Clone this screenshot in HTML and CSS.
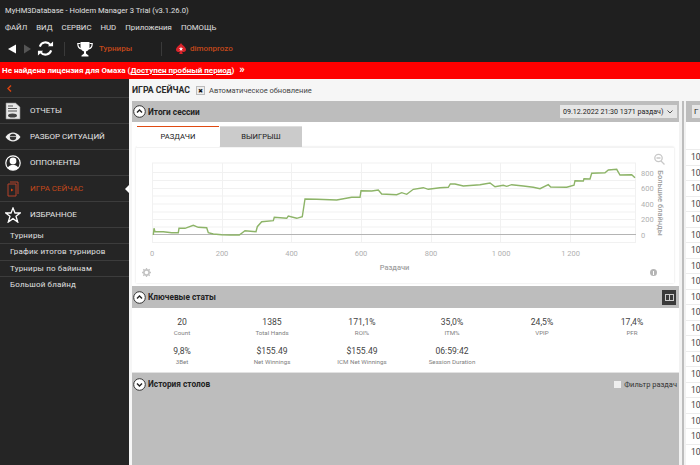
FILE: index.html
```html
<!DOCTYPE html>
<html lang="ru">
<head>
    <meta charset="UTF-8">
    <title>MyHM3Database - Holdem Manager 3 Trial</title>
    <link rel="stylesheet" href="styles.css">
</head>
<body>
<div class="app">
    <div class="titlebar">MyHM3Database - Holdem Manager 3 Trial (v3.1.26.0)</div>
    <nav class="menubar">
        <span>ФАЙЛ</span><span>ВИД</span><span>СЕРВИС</span><span>HUD</span><span>Приложения</span><span>ПОМОЩЬ</span>
    </nav>
    <div class="toolbar">
        <svg class="tool-arrows" width="28" height="14" viewBox="0 0 28 14">
            <path d="M0 7 8 2.500V11.500Z" fill="#fff"/>
            <path d="M23 7 16 2.500V11.500Z" fill="#555"/>
        </svg>
        <svg class="tool-refresh" width="17" height="17" viewBox="0 0 18 18" fill="none" stroke="#fff" stroke-width="2.200">
            <path d="M3 7A6.300 6.300 0 0 1 14 5"/>
            <path d="M15 11A6.300 6.300 0 0 1 4 13"/>
            <path d="M11.500 6.500H17V1.500Z" fill="#fff" stroke="none"/>
            <path d="M6.500 11.500H1V16.500Z" fill="#fff" stroke="none"/>
        </svg>
        <i class="tool-sep"></i>
        <svg class="tool-cup" width="16" height="16" viewBox="0 0 16 16">
            <path d="M3.500 1H12.500V6C12.500 9 10 10 9 10.500V12.500L11.500 14.500V15.500H4.500V14.500L7 12.500V10.500C6 10 3.500 9 3.500 6Z" fill="#fff"/>
            <path d="M3.500 2.500H.8C.8 6 2 7.500 4.500 8M12.500 2.500H15.200C15.200 6 14 7.500 11.500 8" fill="none" stroke="#fff" stroke-width="1.200"/>
        </svg>
        <span class="tool-link">Турниры</span>
        <i class="tool-sep tool-sep-2"></i>
        <svg class="tool-room" width="10" height="11" viewBox="0 0 10 11">
            <path d="M5 0C6.500 2.500 10 4 10 6.800C10 8.800 7.800 9.600 6 8.400L6.800 11H3.200L4 8.400C2.200 9.600 0 8.800 0 6.800C0 4 3.500 2.500 5 0Z" fill="#d8232a"/>
            <path d="M5 3.500 5.600 5.300H7.300L5.900 6.300 6.400 8 5 7 3.600 8 4.100 6.300 2.700 5.300H4.400Z" fill="#fff"/>
        </svg>
        <span class="tool-link">dimonprozo</span>
    </div>
    <div class="license">Не найдена лицензия для Омаха (<u>Доступен пробный период</u>)<span class="license-more">»</span></div>

    <div class="workspace">
        <aside class="sidebar">
            <div class="side-back">
                <svg width="5" height="7" viewBox="0 0 5 7"><path d="M4 .5 1 3.500 4 6.500" fill="none" stroke="#d8430f" stroke-width="1.500"/></svg>
            </div>
            <div class="side-item">
                <svg class="side-icon" width="16" height="18" viewBox="0 0 16 18">
                    <path d="M1 1H10.500L15 5V17H1Z" fill="#e8e8e8" stroke="#888" stroke-width=".6"/>
                    <path d="M3 4H8M3 6.500H12M3 9H12" stroke="#555"/>
                    <ellipse cx="7.500" cy="13.500" rx="4.500" ry="2" fill="#444"/>
                </svg>
                ОТЧЕТЫ
            </div>
            <div class="side-item">
                <svg class="side-icon" width="16" height="10" viewBox="0 0 16 10">
                    <path d="M.5 5C3 1.500 5.500 .5 8 .5S13 1.500 15.500 5C13 8.500 10.500 9.500 8 9.500S3 8.500 .5 5Z" fill="#eee"/>
                    <circle cx="8" cy="5" r="3.200" fill="#333"/>
                    <path d="M5 4.500H11" stroke="#aaa"/>
                </svg>
                РАЗБОР СИТУАЦИЙ
            </div>
            <div class="side-item">
                <svg class="side-icon" width="16" height="16" viewBox="0 0 16 16">
                    <circle cx="8" cy="8" r="7.200" fill="#252525" stroke="#fff" stroke-width="1.200"/>
                    <circle cx="8" cy="6" r="3.400" fill="#fff"/>
                    <path d="M2.500 13C4 10.300 6 10 8 10S12 10.300 13.500 13C12 14.500 10 15 8 15S4 14.500 2.500 13Z" fill="#fff"/>
                </svg>
                ОППОНЕНТЫ
            </div>
            <div class="side-item side-item-active">
                <svg class="side-icon" width="16" height="16" viewBox="0 0 16 16" fill="none" stroke="#b5432a">
                    <path d="M5 1H13V13"/>
                    <path d="M3 3H11V15H3Z"/>
                    <path d="M6 7.500 8.500 9 6 10.500Z" fill="#d8430f" stroke="none"/>
                </svg>
                ИГРА СЕЙЧАС
                <i class="side-marker"></i>
            </div>
            <div class="side-item">
                <svg class="side-icon" width="16" height="16" viewBox="0 0 16 16">
                    <path d="M8 1 10 6H15.400L11 9.300 12.700 15 8 11.600 3.300 15 5 9.300 .6 6H6Z" fill="none" stroke="#fff" stroke-width="1.300"/>
                </svg>
                ИЗБРАННОЕ
            </div>
            <div class="side-sub">Турниры</div>
            <div class="side-sub">График итогов турниров</div>
            <div class="side-sub">Турниры по байинам</div>
            <div class="side-sub">Большой блайнд</div>
        </aside>

        <main class="content">
            <div class="page-head">
                <h1>ИГРА СЕЙЧАС</h1>
                <span class="check check-on">✖</span>
                <span class="auto-label">Автоматическое обновление</span>
            </div>
            <div class="columns">
                <div class="left-col">
                    <div class="panel-head">
                        <svg class="toggle" width="13" height="13" viewBox="0 0 13 13"><circle cx="6.500" cy="6.500" r="5.800" fill="#fff" stroke="#333"/><path d="M4 7.500 6.500 5 9 7.500" fill="none" stroke="#222" stroke-width="1.400"/></svg>
                        <span class="panel-title">Итоги сессии</span>
                        <div class="session-select">09.12.2022 21:30 1371 раздач)<svg width="6" height="4" viewBox="0 0 6 4"><path d="M.5 .5 3 3 5.500 .5" fill="none" stroke="#555"/></svg></div>
                    </div>
                    <div class="summary">
                        <div class="tabs">
                            <div class="tab tab-active">РАЗДАЧИ</div>
                            <div class="tab">ВЫИГРЫШ</div>
                        </div>
                        <div class="chart-card">
                            <svg class="chart" width="538" height="136" viewBox="136 147 538 136">
                                <g stroke="#f1f1f1" fill="none">
                                    <path d="M152 163H636M152 172.500H636M152 180.500H636M152 188.500H636M152 196H636M152 204H636M152 212H636M152 219.500H636M152 227H636M152 242.500H636"/>
                                    <path d="M152.500 163V243M222.500 163V243M291.500 163V243M361.500 163V243M431.500 163V243M500.500 163V243M570.500 163V243M635.500 163V243"/>
                                </g>
                                <path d="M153 234.500H636" stroke="#b4b4b4" stroke-width="1"/>
                                <polyline fill="none" stroke="#8db468" stroke-width="1.400" points="153.300,235 154,228.300 155,231.700 163.300,231.700 171.700,232.700 178.300,232.700 179,228.300 185,228.300 193.300,225.300 198.300,227.300 206.700,227.700 208.300,232.700 213.300,234 221.700,234.700 230,235 239.300,235 245,230.700 256,231.700 257.300,226.700 261.700,221.700 273.300,220.700 274.300,217.300 286.700,218.300 288.300,216 296.700,218.300 302.300,216.700 305,199 316.700,199.300 336.700,200 351.700,197.300 360,197.300 361,190.700 371.700,191 378.300,190 381.700,194 396.700,194.700 401.700,192.700 406.700,194.300 413.300,189.300 423.300,187.700 428.300,189.300 440,187.700 448.300,187.300 450.300,184 455,184 463.300,186 480,184.700 490,183 495,186.700 503.300,185.300 506.700,186.300 511.700,184.700 523.300,186 533.300,187.300 540,188.700 548.300,184.700 550.700,187 566.700,187.300 574,185.300 575,180.700 583.300,181 584,178.700 590,179 591.700,173.300 605,172.700 608.300,170 616.700,169.300 620,175 631.700,174.700 635,177.700"/>
                                <g class="axis-text" text-anchor="middle">
                                    <text x="152" y="256">0</text>
                                    <text x="222" y="256">200</text>
                                    <text x="291.500" y="256">400</text>
                                    <text x="361" y="256">600</text>
                                    <text x="431" y="256">800</text>
                                    <text x="501" y="256">1 000</text>
                                    <text x="570.500" y="256">1 200</text>
                                </g>
                                <g class="axis-text">
                                    <text x="641" y="175.500">800</text>
                                    <text x="641" y="191">600</text>
                                    <text x="641" y="206.500">400</text>
                                    <text x="641" y="222">200</text>
                                    <text x="641" y="237.500">0</text>
                                </g>
                                <text class="axis-title" x="394.500" y="270" text-anchor="middle">Раздачи</text>
                                <text class="axis-title" transform="translate(657.500 203) rotate(90)" text-anchor="middle">Большие блайнды</text>
                                <g fill="none" stroke="#c8c8c8" stroke-width="1.300">
                                    <circle cx="658.500" cy="158" r="3.700"/>
                                    <path d="M661 161 664.500 164.500M656.500 158H660.500"/>
                                </g>
                                <circle cx="146.500" cy="272.500" r="2.600" fill="none" stroke="#c4c4c4" stroke-width="1.600"/>
                                <path d="M146.500 268V270M146.500 275V277M142 272.500H144M149 272.500H151M143.300 269.300 144.700 270.700M148.300 274.300 149.700 275.700M149.700 269.300 148.300 270.700M144.700 274.300 143.300 275.700" stroke="#c4c4c4" stroke-width="1.300"/>
                                <circle cx="653.500" cy="272.500" r="3.500" fill="#b5b5b5"/>
                                <path d="M653.500 271V275" stroke="#fff"/>
                            </svg>
                        </div>
                    </div>

                    <div class="panel-head panel-head-stats">
                        <svg class="toggle" width="13" height="13" viewBox="0 0 13 13"><circle cx="6.500" cy="6.500" r="5.800" fill="#fff" stroke="#333"/><path d="M4 7.500 6.500 5 9 7.500" fill="none" stroke="#222" stroke-width="1.400"/></svg>
                        <span class="panel-title">Ключевые статы</span>
                        <div class="layout-btn"><i></i></div>
                    </div>
                    <div class="stats">
                        <div class="stat"><b>20</b><small>Count</small></div>
                        <div class="stat"><b>1385</b><small>Total Hands</small></div>
                        <div class="stat"><b>171,1%</b><small>ROI%</small></div>
                        <div class="stat"><b>35,0%</b><small>ITM%</small></div>
                        <div class="stat"><b>24,5%</b><small>VPIP</small></div>
                        <div class="stat"><b>17,4%</b><small>PFR</small></div>
                        <div class="stat"><b>9,8%</b><small>3Bet</small></div>
                        <div class="stat"><b>$155.49</b><small>Net Winnings</small></div>
                        <div class="stat"><b>$155.49</b><small>ICM Net Winnings</small></div>
                        <div class="stat"><b>06:59:42</b><small>Session Duration</small></div>
                    </div>

                    <div class="panel-head panel-head-last">
                        <svg class="toggle" width="13" height="13" viewBox="0 0 13 13"><circle cx="6.500" cy="6.500" r="5.800" fill="#fff" stroke="#333"/><path d="M4 5.500 6.500 8 9 5.500" fill="none" stroke="#222" stroke-width="1.400"/></svg>
                        <span class="panel-title">История столов</span>
                        <span class="check filter-check"></span>
                        <span class="filter-label">Фильтр раздач</span>
                    </div>
                </div>

                <div class="splitter"></div>

                <div class="right-col">
                    <div class="right-head"><div class="right-btn">Г</div></div>
                    <div class="right-gap"></div>
                    <div class="row">10</div><div class="row">10</div><div class="row">10</div>
                    <div class="row">10</div><div class="row">10</div><div class="row">10</div>
                    <div class="row">10</div><div class="row">10</div><div class="row">10</div>
                    <div class="row">10</div><div class="row">10</div><div class="row">10</div>
                    <div class="row">10</div><div class="row">10</div><div class="row">10</div>
                    <div class="row">10</div><div class="row">10</div><div class="row">10</div>
                    <div class="row">10</div><div class="row">10</div>
                </div>
            </div>
        </main>
    </div>
</div>
</body>
</html>
```

FILE: styles.css
```css
html, body {
    margin: 0;
    padding: 0;
}

body {
    font-family: Roboto, "Open Sans", sans-serif;
    background-color: #1f1f1f;
}

.app {
    width: 700px;
    height: 465px;
    overflow: hidden;
    display: flex;
    flex-direction: column;
}

.titlebar {
    height: 20px;
    line-height: 22px;
    padding-left: 5px;
    font-size: 7.600px;
    color: #e0e0e0;
    white-space: nowrap;
}

.menubar {
    height: 15px;
    line-height: 15px;
    padding-left: 5px;
    display: flex;
    gap: 9px;
    font-size: 7.800px;
    color: #e0e0e0;
}

.toolbar {
    height: 27px;
    display: flex;
    align-items: center;
    padding-left: 8px;
    color: #c0400f;
}

.tool-arrows {
    margin-right: 1px;
}

.tool-sep {
    width: 1px;
    height: 14px;
    background-color: #3a3a3a;
    margin: 0 12px 0 10px;
}

.tool-sep-2 {
    margin: 0 14px 0 29px;
}

.tool-link {
    font-size: 8px;
    font-weight: 500;
    margin-left: 6px;
    color: #c4481a;
}

.tool-room + .tool-link {
    margin-left: 4px;
}

.license {
    height: 17px;
    line-height: 17px;
    flex-shrink: 0;
    background-color: #fe0000;
    color: #fff;
    font-size: 8px;
    font-weight: 700;
    padding-left: 2px;
    white-space: nowrap;
}

.license-more {
    font-size: 11px;
    line-height: 14px;
    margin-left: 5px;
}

.workspace {
    flex: 1;
    display: flex;
    min-height: 0;
}

.sidebar {
    width: 129px;
    flex-shrink: 0;
    background-color: #252525;
    color: #ddd;
}

.side-back {
    height: 18px;
    padding-left: 7px;
    display: flex;
    align-items: center;
}

.side-item {
    height: 25px;
    border-top: 1px solid #3c3c3c;
    display: flex;
    align-items: center;
    position: relative;
    font-size: 8px;
    color: #e4e4e4;
}

.side-item-active {
    color: #c4481a;
}

.side-icon {
    width: 16px;
    margin: 0 9px 0 5px;
    flex-shrink: 0;
}

.side-marker {
    position: absolute;
    right: 0;
    top: 9px;
    border: 4px solid transparent;
    border-right-color: #fff;
    border-left-width: 0;
}

.side-sub {
    height: 15.250px;
    line-height: 15px;
    border-top: 1px solid #3c3c3c;
    padding-left: 10px;
    font-size: 8px;
    letter-spacing: .18px;
    color: #e0e0e0;
    white-space: nowrap;
}

.content {
    flex: 1;
    min-width: 0;
    background-color: #f6f6f6;
    display: flex;
    flex-direction: column;
}

.page-head {
    height: 22px;
    display: flex;
    align-items: center;
    padding-left: 3px;
}

.page-head h1 {
    margin: 0 6px 0 0;
    font-size: 8.700px;
    font-weight: 700;
    color: #2a2a2a;
}

.check {
    width: 7px;
    height: 7px;
    background-color: #eee;
    border: 1px solid #bbb;
    display: inline-block;
    flex-shrink: 0;
}

.check-on {
    font-size: 6px;
    line-height: 7px;
    text-align: center;
    color: #111;
}

.auto-label {
    font-size: 7.500px;
    color: #444;
    margin-left: 4px;
}

.columns {
    flex: 1;
    display: flex;
    min-height: 0;
    padding-left: 3px;
}

.left-col {
    width: 547px;
    display: flex;
    flex-direction: column;
    flex-shrink: 0;
}

.panel-head {
    height: 21px;
    flex-shrink: 0;
    background-color: #bdbdbd;
    display: flex;
    align-items: center;
    padding-left: 1px;
    color: #222;
}

.panel-head-stats {
    height: 22px;
}

.panel-head-last {
    flex: 1;
    align-items: flex-start;
    padding-top: 5px;
}

.toggle {
    margin-right: 2px;
    flex-shrink: 0;
}

.panel-title {
    font-size: 8.300px;
    font-weight: 700;
    flex: 1;
}

.panel-head-last .panel-title {
    line-height: 13px;
}

.session-select {
    width: 117px;
    height: 13px;
    box-sizing: border-box;
    line-height: 13px;
    margin-right: 2px;
    padding: 0 4px 0 3px;
    background-color: #e6e6e6;
    font-size: 7.100px;
    color: #222;
    display: flex;
    align-items: center;
    justify-content: space-between;
    white-space: nowrap;
}

.summary {
    height: 164px;
    background-color: #fff;
    padding: 4px 5px 0 4px;
    box-sizing: border-box;
}

.tabs {
    display: flex;
    gap: 1px;
    padding-left: 1px;
}

.tab {
    width: 82px;
    height: 21px;
    line-height: 20px;
    box-sizing: border-box;
    text-align: center;
    font-size: 7.600px;
    color: #222;
    background-color: #cbcbcb;
    border-top: 1px solid #ddd;
}

.tab-active {
    background-color: #fff;
    border-top: 1px solid #e04a12;
}

.chart-card {
    width: 538px;
    height: 136px;
    border-top: 1px solid #f3f3f3;
    box-sizing: border-box;
    box-shadow: 0 0 2px #ddd;
}

.chart {
    display: block;
    margin-top: -1px;
}

.axis-text {
    font-size: 7.500px;
    fill: #b0b0b0;
}

.axis-title {
    font-size: 7.500px;
    font-weight: 500;
    fill: #a0a0a0;
}

.layout-btn {
    width: 14px;
    height: 15px;
    margin-right: 3px;
    background-color: #3a3a3a;
    display: flex;
    align-items: center;
    justify-content: center;
}

.layout-btn i {
    width: 9px;
    height: 7px;
    box-sizing: border-box;
    border: 1px solid #ccc;
    background: linear-gradient(#ccc, #ccc) center / 1px 100% no-repeat;
}

.stats {
    height: 65px;
    flex-shrink: 0;
    box-sizing: border-box;
    background-color: #fff;
    border-bottom: 1px solid #e2e2e2;
    padding: 7.500px 0 0 5px;
    display: grid;
    grid-template-columns: repeat(6, 90px);
    grid-auto-rows: 29px;
}

.stat {
    text-align: center;
    display: flex;
    flex-direction: column;
    align-items: center;
}

.stat b {
    font-size: 8.600px;
    line-height: 13px;
    font-weight: 400;
    color: #444;
}

.stat small {
    font-size: 6.200px;
    line-height: 9px;
    color: #808080;
    white-space: nowrap;
}

.filter-check {
    width: 7px;
    height: 7px;
    background-color: #eee;
    border: none;
    margin: 3px 3px 0 0;
}

.filter-label {
    font-size: 7.500px;
    line-height: 13px;
    color: #333;
    margin-right: 2px;
}

.splitter {
    width: 7px;
    flex-shrink: 0;
    background: linear-gradient(#bdbdbd, #bdbdbd) center / 2px 100% no-repeat #f2f2f2;
}

.right-col {
    flex: 1;
    min-width: 0;
    background-color: #fff;
    overflow: hidden;
}

.right-head {
    height: 21px;
    background-color: #bdbdbd;
    padding: 4px 0 0 6px;
    box-sizing: border-box;
}

.right-btn {
    height: 13px;
    line-height: 13px;
    background-color: #e6e6e6;
    font-size: 8px;
    padding-left: 2px;
    color: #222;
}

.right-gap {
    height: 27px;
}

.row {
    height: 15.500px;
    line-height: 15px;
    box-sizing: border-box;
    border-top: 1px solid #ececec;
    padding-left: 5px;
    font-size: 8.500px;
    color: #444;
}
```
